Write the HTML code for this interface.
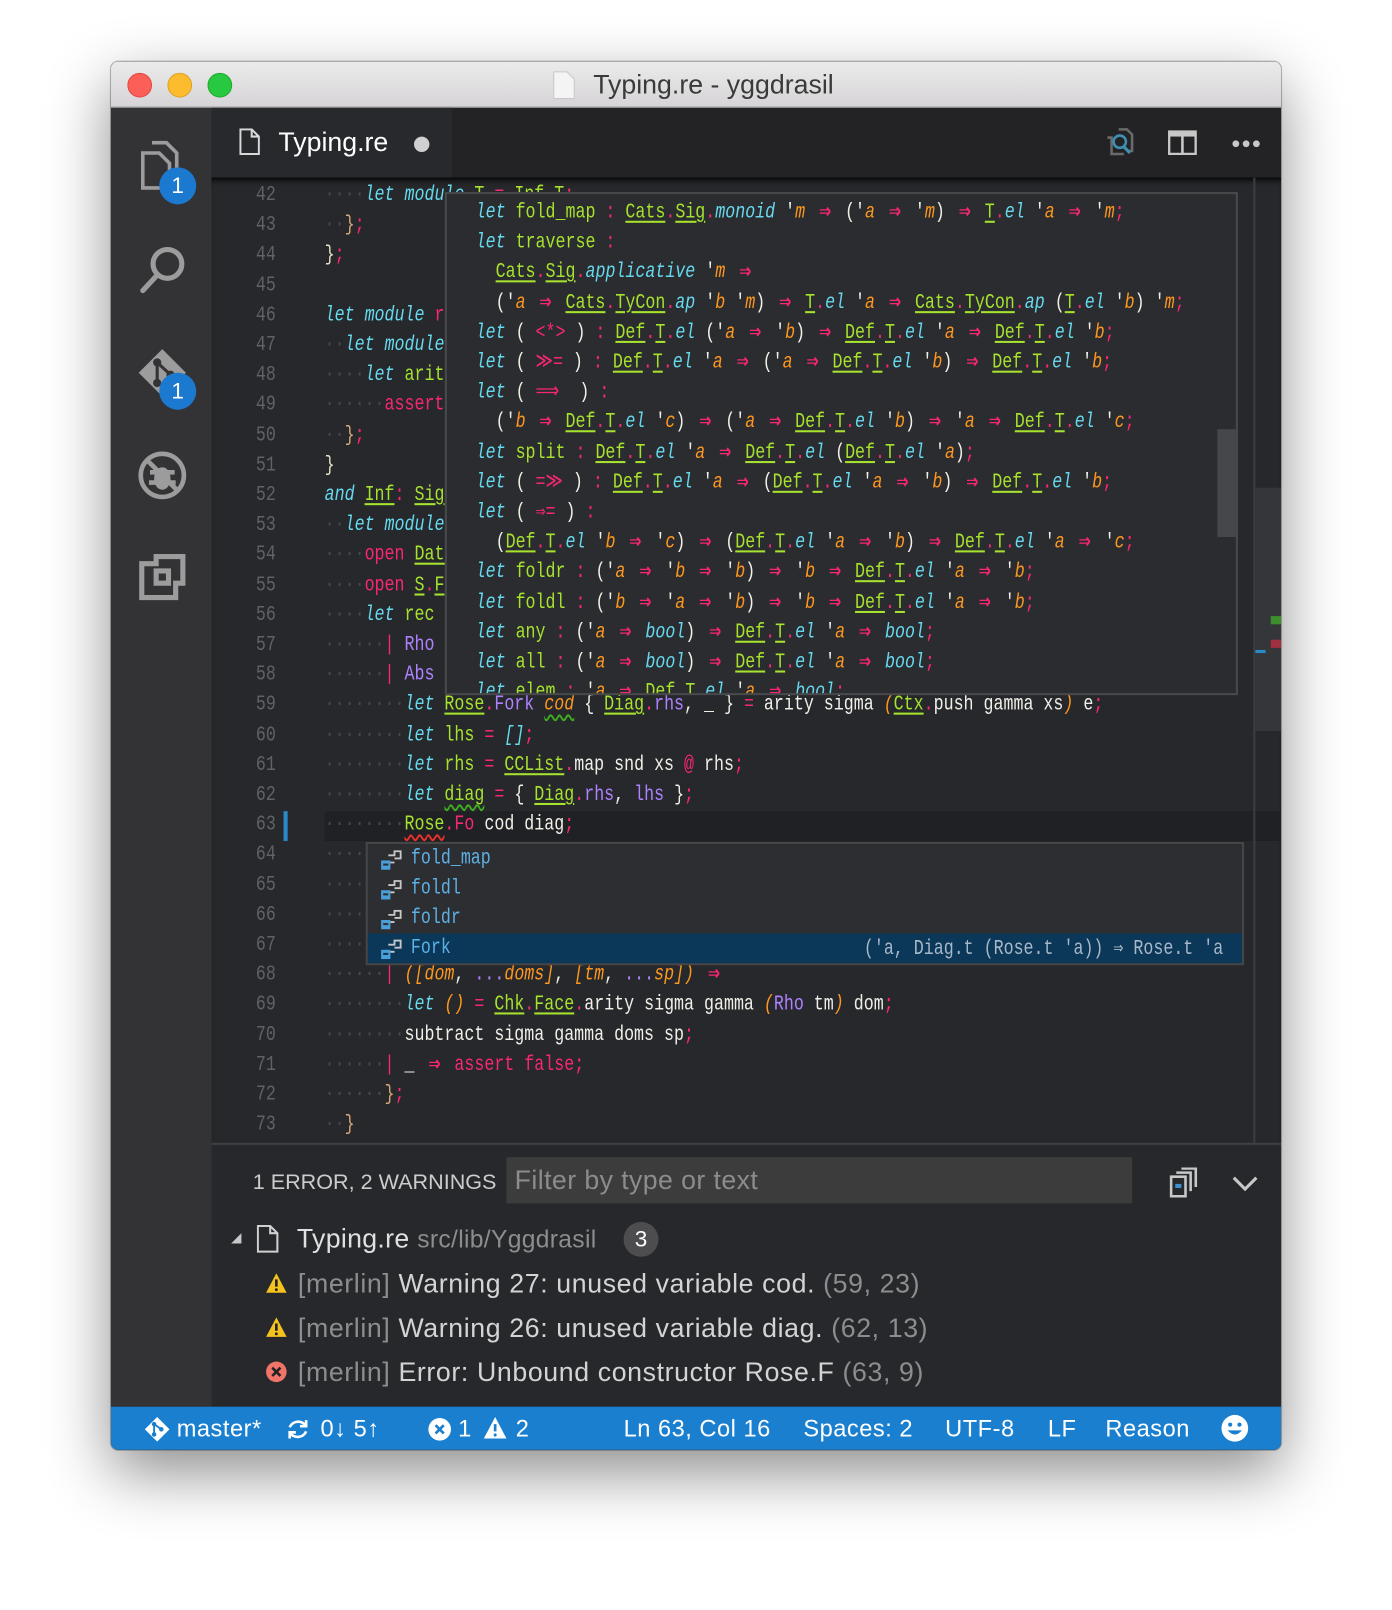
<!DOCTYPE html>
<html><head><meta charset="utf-8">
<style>
*{margin:0;padding:0;box-sizing:border-box}
html,body{width:1392px;height:1610px;overflow:hidden;background:#fff}
#wrap{position:absolute;left:0;top:0;width:1355px;height:1568px;transform:scale(1.0273,1.0268);transform-origin:0 0;font-family:"Liberation Sans",sans-serif}
.win{position:absolute;left:108px;top:60px;width:1139px;height:1352px;border-radius:7px;overflow:hidden;box-shadow:0 22px 60px rgba(0,0,0,.45),0 0 0 1px rgba(0,0,0,.25);background:#26282b}
.title{position:absolute;left:0;top:0;width:100%;height:45px;background:linear-gradient(#ecebec,#d6d4d6);border-bottom:1px solid #b8b6b8}
.title .t{position:absolute;left:0;width:100%;top:7px;text-align:center;font-size:26px;color:#3a3a3a;padding-left:34px}
.light{position:absolute;top:11px;width:24px;height:24px;border-radius:50%}
.act{position:absolute;left:0;top:45px;width:98px;height:1265px;background:#333336}
.badge{position:absolute;width:36px;height:36px;border-radius:50%;background:#1b7ad0;color:#fff;font-size:22px;text-align:center;line-height:36px}
.tabbar{position:absolute;left:98px;top:45px;width:1041px;height:68px;background:#232325}
.tab{position:absolute;left:0;top:0;width:234px;height:68px;background:#27292c;color:#fff;font-size:26px}
.ed{position:absolute;left:98px;top:113px;width:1041px;height:940px;background:#26282b;overflow:hidden;box-shadow:inset 0 6px 6px -4px #000}
pre{font-family:"Liberation Mono","DejaVu Sans Mono",monospace;font-size:21px;line-height:29.2px;color:#f0efe8;transform:scaleX(.771);transform-origin:0 0;white-space:pre;position:absolute}
k{color:#66d9ef;font-style:italic}
c{color:#66d9ef;font-style:italic}
g{color:#a6e22e}
u{color:#a6e22e;text-decoration:underline 2px #a6e22e;text-underline-offset:3px}
p{display:inline;color:#f92672}
o{color:#fd971f;font-style:italic}
v{color:#ae81ff}
d{color:#45484c}
t{color:#d9a878}
a2{display:inline-block;width:25.2px;text-align:center;color:#f92672;font-weight:bold;font-size:25px;line-height:1;vertical-align:-1px}
.sqg{text-decoration:underline wavy #3fae1f;text-underline-offset:4px}
.sqr{text-decoration:underline wavy #f0302a;text-underline-offset:4px}
.nums{color:#5f6266;text-align:right;width:72px}
.pop{position:absolute;left:227px;top:14px;width:772px;height:490px;background:#2b2c2f;border:2px solid #48494b;overflow:hidden}
.sug{position:absolute;left:150px;top:647px;width:855px;height:120px;background:#2d2e31;border:2px solid #454648;overflow:hidden}
.row{position:absolute;left:0;width:100%;height:29px}
.row .n{position:absolute;left:42px;top:0;font-family:"Liberation Mono",monospace;font-size:21px;line-height:29px;color:#5cb0e6;transform:scaleX(.771);transform-origin:0 0}
.row svg{position:absolute;left:12px;top:6px}
.panel{position:absolute;left:98px;top:1053px;width:1041px;height:257px;background:#26282b;border-top:2px solid #3e4043;color:#cfcfcf}
.status{position:absolute;left:0;top:1310px;width:100%;height:42px;background:#1a7fcf;color:#fff;font-size:23px;letter-spacing:.5px}
.status span{position:absolute;top:8px}
.msg{position:absolute;left:84px;font-size:26px;letter-spacing:.6px;white-space:nowrap;color:#d4d4d4}
.msg .g{color:#8d8d8d}
</style></head><body><div id="wrap">
<div class="win">
 <div class="title">
  <div class="light" style="left:16px;background:#fc5f57;border:1px solid #de4a42"></div>
  <div class="light" style="left:55px;background:#fdbc2e;border:1px solid #dea123"></div>
  <div class="light" style="left:94px;background:#28c840;border:1px solid #1eaa2e"></div>
  <svg style="position:absolute;left:430px;top:9px" width="22" height="28" viewBox="0 0 22 28"><path d="M1 1h13l7 7v19H1z" fill="#f4f4f4" stroke="#c8c8c8"/></svg>
  <div class="t">Typing.re - yggdrasil</div>
 </div>
 <div class="act">
  <svg style="position:absolute;left:28px;top:32px" width="44" height="48" viewBox="0 0 44 48" fill="none" stroke="#9c9c9c" stroke-width="3.5"><path d="M12 2h14l10 10v22"/><path d="M3 12h16l10 10v24H3z"/></svg>
  <div class="badge" style="left:47px;top:58px">1</div>
  <svg style="position:absolute;left:26px;top:133px" width="50" height="50" viewBox="0 0 50 50" fill="none" stroke="#9c9c9c" stroke-width="5"><circle cx="29" cy="19" r="14"/><path d="M19 30L5 45" stroke-linecap="round"/></svg>
  <svg style="position:absolute;left:25px;top:233px" width="50" height="50" viewBox="0 0 50 50"><path d="M25 2L48 25 25 48 2 25z" fill="#9c9c9c"/><circle cx="20" cy="15" r="4" fill="#333336"/><circle cx="20" cy="35" r="4" fill="#333336"/><circle cx="33" cy="27" r="4" fill="#333336"/><path d="M20 15v20M20 15l13 12" stroke="#333336" stroke-width="3"/></svg>
  <div class="badge" style="left:47px;top:258px">1</div>
  <svg style="position:absolute;left:25px;top:333px" width="50" height="50" viewBox="0 0 50 50" fill="none" stroke="#9c9c9c" stroke-width="4.5"><circle cx="25" cy="25" r="21"/><path d="M10 10l30 30"/><ellipse cx="25" cy="28" rx="8" ry="11" fill="#9c9c9c" stroke="none"/><path d="M13 22h24M12 32h26"/></svg>
  <svg style="position:absolute;left:27px;top:434px" width="46" height="46" viewBox="0 0 46 46" fill="none" stroke="#9c9c9c" stroke-width="5"><path d="M3 10h14v-7h26v26h-7v14H3z"/><path d="M17 17h12v12H17z"/></svg>
 </div>
 <div class="tabbar">
  <div class="tab">
   <svg style="position:absolute;left:27px;top:20px" width="20" height="26" viewBox="0 0 20 26" fill="none" stroke="#d8d8d8" stroke-width="2"><path d="M1 1h11l7 7v17H1z"/><path d="M12 1v7h7"/></svg>
   <span style="position:absolute;left:65px;top:18px">Typing.re</span>
   <span style="position:absolute;left:197px;top:28px;width:15px;height:15px;border-radius:50%;background:#cfcfcf"></span>
  </div>
  <svg style="position:absolute;left:868px;top:18px" width="30" height="32" viewBox="0 0 30 32" fill="none" stroke-width="2.5"><path d="M15 3h8l5 5v16h-3M4 11h4v16h12" stroke="#6a6a6a"/><circle cx="16" cy="15" r="6" stroke="#3f8fb0"/><path d="M20 20l6 6" stroke="#3f8fb0" stroke-width="3"/></svg>
  <svg style="position:absolute;left:931px;top:22px" width="28" height="24" viewBox="0 0 28 24"><path d="M1 1h26v22H1zM14 5v17" fill="none" stroke="#c8c8c8" stroke-width="2.5"/><rect x="1" y="1" width="26" height="5" fill="#c8c8c8"/></svg>
  <svg style="position:absolute;left:993px;top:31px" width="28" height="8"><circle cx="4" cy="4" r="3.3" fill="#c8c8c8"/><circle cx="14" cy="4" r="3.3" fill="#c8c8c8"/><circle cx="24" cy="4" r="3.3" fill="#c8c8c8"/></svg>
 </div>
 <div class="ed">
  <div style="position:absolute;left:110px;top:617px;width:931px;height:29px;background:#1f2124"></div>
  <div style="position:absolute;left:70px;top:617px;width:4px;height:29px;background:#2a8ac8"></div>
  <div style="position:absolute;left:1014px;top:0;width:2px;height:940px;background:#3b3d40"></div>
  <div style="position:absolute;left:1016px;top:302px;width:25px;height:237px;background:#34363a"></div>
  <div style="position:absolute;left:1031px;top:427px;width:10px;height:8px;background:#3e8e2e"></div>
  <div style="position:absolute;left:1031px;top:450px;width:10px;height:8px;background:#a03040"></div>
  <div style="position:absolute;left:1016px;top:460px;width:10px;height:3px;background:#2a8ac8"></div>
<pre class="nums" style="left:7px;top:3px">42
43
44
45
46
47
48
49
50
51
52
53
54
55
56
57
58
59
60
61
62
63
64
65
66
67
68
69
70
71
72
73</pre>
<pre style="left:110px;top:3px"><d>····</d><k>let</k> <k>module</k> <u>T</u> <p>=</p> <u>Inf</u><p>.</p><u>T</u><p>;</p>
<d>··</d><t>}</t><p>;</p>
<t style="color:#e8e0c8">}</t><p>;</p>

<k>let</k> <k>module</k> <p>rec</p> <u>Chk</u><p>:</p> <u>Sig</u>
<d>··</d><k>let</k> <k>module</k> <u>Term</u>
<d>····</d><k>let</k> <g>arity</g> <p>=</p>
<d>······</d><p>assert</p> <p>false</p>
<d>··</d><t>}</t><p>;</p>
<t style="color:#e8e0c8">}</t>
<k>and</k> <u>Inf</u><p>:</p> <u>Sig</u>
<d>··</d><k>let</k> <k>module</k> <u>Face</u>
<d>····</d><p>open</p> <u>Data</u>
<d>····</d><p>open</p> <u>S</u><p>.</p><u>F</u>
<d>····</d><k>let</k> <g>rec</g> <g>x</g>
<d>······</d><p>|</p> <v>Rho</v>
<d>······</d><p>|</p> <v>Abs</v>
<d>········</d><k>let</k> <u>Rose</u><p>.</p><v>Fork</v> <o class="sqg">cod</o> { <u>Diag</u><p>.</p><v>rhs</v>, _ } <p>=</p> arity sigma <o>(</o><u>Ctx</u><p>.</p>push gamma xs<o>)</o> e<p>;</p>
<d>········</d><k>let</k> <g>lhs</g> <p>=</p> <c>[]</c><p>;</p>
<d>········</d><k>let</k> <g>rhs</g> <p>=</p> <u>CCList</u><p>.</p>map snd xs <p>@</p> rhs<p>;</p>
<d>········</d><k>let</k> <g class="sqg">diag</g> <p>=</p> { <u>Diag</u><p>.</p><v>rhs</v>, <v>lhs</v> }<p>;</p>
<d>········</d><u class="sqr">Rose</u><p>.</p><p>Fo</p> cod diag<p>;</p>
<d>········</d>
<d>········</d>
<d>········</d>
<d>········</d>
<d>······</d><p>|</p> <o>([dom</o>, <v>...</v><o>doms]</o>, <o>[tm</o>, <v>...</v><o>sp])</o> <a2>⇒</a2>
<d>········</d><k>let</k> <o>()</o> <p>=</p> <u>Chk</u><p>.</p><u>Face</u><p>.</p>arity sigma gamma <o>(</o><v>Rho</v> tm<o>)</o> dom<p>;</p>
<d>········</d>subtract sigma gamma doms sp<p>;</p>
<d>······</d><p>|</p> _ <a2>⇒</a2> <p>assert</p> <p>false</p><p>;</p>
<d>······</d><t>}</t><p>;</p>
<d>··</d><t>}</t></pre>
  <div class="pop">
   <div style="position:absolute;left:750px;top:229px;width:18px;height:105px;background:#45474a"></div>
<pre style="left:28px;top:4px"><k>let</k> <g>fold_map</g> <p>:</p> <u>Cats</u><p>.</p><u>Sig</u><p>.</p><c>monoid</c> '<o>m</o> <a2>⇒</a2> ('<o>a</o> <a2>⇒</a2> '<o>m</o>) <a2>⇒</a2> <u>T</u><p>.</p><c>el</c> '<o>a</o> <a2>⇒</a2> '<o>m</o><p>;</p>
<k>let</k> <g>traverse</g> <p>:</p>
  <u>Cats</u><p>.</p><u>Sig</u><p>.</p><c>applicative</c> '<o>m</o> <a2>⇒</a2>
  ('<o>a</o> <a2>⇒</a2> <u>Cats</u><p>.</p><u>TyCon</u><p>.</p><c>ap</c> '<o>b</o> '<o>m</o>) <a2>⇒</a2> <u>T</u><p>.</p><c>el</c> '<o>a</o> <a2>⇒</a2> <u>Cats</u><p>.</p><u>TyCon</u><p>.</p><c>ap</c> (<u>T</u><p>.</p><c>el</c> '<o>b</o>) '<o>m</o><p>;</p>
<k>let</k> ( <p>&lt;*&gt;</p> ) <p>:</p> <u>Def</u><p>.</p><u>T</u><p>.</p><c>el</c> ('<o>a</o> <a2>⇒</a2> '<o>b</o>) <a2>⇒</a2> <u>Def</u><p>.</p><u>T</u><p>.</p><c>el</c> '<o>a</o> <a2>⇒</a2> <u>Def</u><p>.</p><u>T</u><p>.</p><c>el</c> '<o>b</o><p>;</p>
<k>let</k> ( <p>≫=</p> ) <p>:</p> <u>Def</u><p>.</p><u>T</u><p>.</p><c>el</c> '<o>a</o> <a2>⇒</a2> ('<o>a</o> <a2>⇒</a2> <u>Def</u><p>.</p><u>T</u><p>.</p><c>el</c> '<o>b</o>) <a2>⇒</a2> <u>Def</u><p>.</p><u>T</u><p>.</p><c>el</c> '<o>b</o><p>;</p>
<k>let</k> ( <p>⟹ </p> ) <p>:</p>
  ('<o>b</o> <a2>⇒</a2> <u>Def</u><p>.</p><u>T</u><p>.</p><c>el</c> '<o>c</o>) <a2>⇒</a2> ('<o>a</o> <a2>⇒</a2> <u>Def</u><p>.</p><u>T</u><p>.</p><c>el</c> '<o>b</o>) <a2>⇒</a2> '<o>a</o> <a2>⇒</a2> <u>Def</u><p>.</p><u>T</u><p>.</p><c>el</c> '<o>c</o><p>;</p>
<k>let</k> <g>split</g> <p>:</p> <u>Def</u><p>.</p><u>T</u><p>.</p><c>el</c> '<o>a</o> <a2>⇒</a2> <u>Def</u><p>.</p><u>T</u><p>.</p><c>el</c> (<u>Def</u><p>.</p><u>T</u><p>.</p><c>el</c> '<o>a</o>)<p>;</p>
<k>let</k> ( <p>=≫</p> ) <p>:</p> <u>Def</u><p>.</p><u>T</u><p>.</p><c>el</c> '<o>a</o> <a2>⇒</a2> (<u>Def</u><p>.</p><u>T</u><p>.</p><c>el</c> '<o>a</o> <a2>⇒</a2> '<o>b</o>) <a2>⇒</a2> <u>Def</u><p>.</p><u>T</u><p>.</p><c>el</c> '<o>b</o><p>;</p>
<k>let</k> ( <p>⇒=</p> ) <p>:</p>
  (<u>Def</u><p>.</p><u>T</u><p>.</p><c>el</c> '<o>b</o> <a2>⇒</a2> '<o>c</o>) <a2>⇒</a2> (<u>Def</u><p>.</p><u>T</u><p>.</p><c>el</c> '<o>a</o> <a2>⇒</a2> '<o>b</o>) <a2>⇒</a2> <u>Def</u><p>.</p><u>T</u><p>.</p><c>el</c> '<o>a</o> <a2>⇒</a2> '<o>c</o><p>;</p>
<k>let</k> <g>foldr</g> <p>:</p> ('<o>a</o> <a2>⇒</a2> '<o>b</o> <a2>⇒</a2> '<o>b</o>) <a2>⇒</a2> '<o>b</o> <a2>⇒</a2> <u>Def</u><p>.</p><u>T</u><p>.</p><c>el</c> '<o>a</o> <a2>⇒</a2> '<o>b</o><p>;</p>
<k>let</k> <g>foldl</g> <p>:</p> ('<o>b</o> <a2>⇒</a2> '<o>a</o> <a2>⇒</a2> '<o>b</o>) <a2>⇒</a2> '<o>b</o> <a2>⇒</a2> <u>Def</u><p>.</p><u>T</u><p>.</p><c>el</c> '<o>a</o> <a2>⇒</a2> '<o>b</o><p>;</p>
<k>let</k> <g>any</g> <p>:</p> ('<o>a</o> <a2>⇒</a2> <c>bool</c>) <a2>⇒</a2> <u>Def</u><p>.</p><u>T</u><p>.</p><c>el</c> '<o>a</o> <a2>⇒</a2> <c>bool</c><p>;</p>
<k>let</k> <g>all</g> <p>:</p> ('<o>a</o> <a2>⇒</a2> <c>bool</c>) <a2>⇒</a2> <u>Def</u><p>.</p><u>T</u><p>.</p><c>el</c> '<o>a</o> <a2>⇒</a2> <c>bool</c><p>;</p>
<k>let</k> <g>elem</g> <p>:</p> '<o>a</o> <a2>⇒</a2> <u>Def</u><p>.</p><u>T</u><p>.</p><c>el</c> '<o>a</o> <a2>⇒</a2> <c>bool</c><p>;</p></pre>
  </div>
  <div class="sug">
   <div class="row" style="top:0"><svg width="22" height="20" viewBox="0 0 22 20"><rect x="1" y="10" width="9" height="9" fill="#4a9fd8"/><rect x="3" y="13" width="5" height="2" fill="#2d2e31"/><path d="M8 5h6V1h6v7h-6M10 12h4" fill="none" stroke="#c8c8c8" stroke-width="1.8"/></svg><div class="n">fold_map</div></div>
   <div class="row" style="top:29px"><svg width="22" height="20" viewBox="0 0 22 20"><rect x="1" y="10" width="9" height="9" fill="#4a9fd8"/><rect x="3" y="13" width="5" height="2" fill="#2d2e31"/><path d="M8 5h6V1h6v7h-6M10 12h4" fill="none" stroke="#c8c8c8" stroke-width="1.8"/></svg><div class="n">foldl</div></div>
   <div class="row" style="top:58px"><svg width="22" height="20" viewBox="0 0 22 20"><rect x="1" y="10" width="9" height="9" fill="#4a9fd8"/><rect x="3" y="13" width="5" height="2" fill="#2d2e31"/><path d="M8 5h6V1h6v7h-6M10 12h4" fill="none" stroke="#c8c8c8" stroke-width="1.8"/></svg><div class="n">foldr</div></div>
   <div class="row" style="top:87px;height:31px;background:#0b3758"><svg width="22" height="20" viewBox="0 0 22 20"><rect x="1" y="10" width="9" height="9" fill="#4a9fd8"/><rect x="3" y="13" width="5" height="2" fill="#0b3758"/><path d="M8 5h6V1h6v7h-6M10 12h4" fill="none" stroke="#c8c8c8" stroke-width="1.8"/></svg><div class="n">Fork</div>
    <div style="position:absolute;right:18px;top:0;font-family:'Liberation Mono',monospace;font-size:21px;line-height:31px;color:#a8b8c8;transform:scaleX(.771);transform-origin:100% 0;white-space:pre">('a, Diag.t (Rose.t 'a)) ⇒ Rose.t 'a</div></div>
  </div>
 </div>
 <div class="panel">
  <div style="position:absolute;left:40px;top:25px;font-size:21px;color:#cccccc">1 ERROR, 2 WARNINGS</div>
  <div style="position:absolute;left:287px;top:12px;width:609px;height:45px;background:#3c3c3c;color:#8c8c8c;font-size:26px;letter-spacing:.4px;padding:7px 0 0 8px">Filter by type or text</div>
  <svg style="position:absolute;left:932px;top:22px" width="28" height="30" viewBox="0 0 28 30" fill="none" stroke="#c8c8c8" stroke-width="2.5"><path d="M2 9h14v19H2z"/><path d="M7 5h14v18M12 1h14v18"/><rect x="6" y="16" width="6" height="4" fill="#3b8fd0" stroke="none"/></svg>
  <svg style="position:absolute;left:993px;top:30px" width="26" height="16" viewBox="0 0 26 16"><path d="M2 2l11 11L24 2" fill="none" stroke="#c8c8c8" stroke-width="3"/></svg>
  <svg style="position:absolute;left:18px;top:85px" width="12" height="12"><path d="M11 1v10H1z" fill="#c8c8c8"/></svg>
  <svg style="position:absolute;left:44px;top:78px" width="22" height="27" viewBox="0 0 22 27" fill="none" stroke="#d0d0d0" stroke-width="2"><path d="M1 1h12l7 7v18H1z"/><path d="M13 1v7h7"/></svg>
  <div style="position:absolute;left:83px;top:76px;font-size:26px;letter-spacing:.3px;color:#e0e0e0;white-space:nowrap">Typing.re <span style="color:#8d8d8d;font-size:24px">src/lib/Yggdrasil</span></div>
  <div style="position:absolute;left:401px;top:75px;width:34px;height:34px;border-radius:50%;background:#4d4d4f;color:#fff;font-size:22px;text-align:center;line-height:34px">3</div>
  <svg style="position:absolute;left:52px;top:124px" width="22" height="22" viewBox="0 0 22 22"><path d="M11 1L21 20H1z" fill="#f4c21f"/><path d="M11 7v7" stroke="#222" stroke-width="2.6"/><circle cx="11" cy="17" r="1.4" fill="#222"/></svg>
  <div class="msg" style="top:120px"><span class="g">[merlin]</span> Warning 27: unused variable cod. <span class="g">(59, 23)</span></div>
  <svg style="position:absolute;left:52px;top:167px" width="22" height="22" viewBox="0 0 22 22"><path d="M11 1L21 20H1z" fill="#f4c21f"/><path d="M11 7v7" stroke="#222" stroke-width="2.6"/><circle cx="11" cy="17" r="1.4" fill="#222"/></svg>
  <div class="msg" style="top:163px"><span class="g">[merlin]</span> Warning 26: unused variable diag. <span class="g">(62, 13)</span></div>
  <svg style="position:absolute;left:52px;top:210px" width="22" height="22" viewBox="0 0 22 22"><circle cx="11" cy="11" r="10" fill="#f07568"/><path d="M7 7l8 8M15 7l-8 8" stroke="#222" stroke-width="2.5"/></svg>
  <div class="msg" style="top:206px"><span class="g">[merlin]</span> Error: Unbound constructor Rose.F <span class="g">(63, 9)</span></div>
 </div>
 <div class="status">
  <svg style="position:absolute;left:32px;top:9px" width="26" height="26" viewBox="0 0 26 26"><path d="M13 1l12 12-12 12L1 13z" fill="#fff"/><circle cx="10" cy="8" r="2.2" fill="#1a7fcf"/><circle cx="10" cy="18" r="2.2" fill="#1a7fcf"/><circle cx="17" cy="13" r="2.2" fill="#1a7fcf"/><path d="M10 8v10M10 8l7 5" stroke="#1a7fcf" stroke-width="1.8"/></svg>
  <span style="left:64px">master*</span>
  <svg style="position:absolute;left:170px;top:10px" width="24" height="24" viewBox="0 0 24 24" fill="none" stroke="#fff" stroke-width="2.6"><path d="M20 9a9 9 0 0 0-16 1M4 15a9 9 0 0 0 16-1"/><path d="M20 3v6h-6M4 21v-6h6"/></svg>
  <span style="left:204px">0↓ 5↑</span>
  <svg style="position:absolute;left:308px;top:10px" width="24" height="24" viewBox="0 0 24 24"><circle cx="12" cy="12" r="11" fill="#fff"/><path d="M8 8l8 8M16 8l-8 8" stroke="#1a7fcf" stroke-width="2.6"/></svg>
  <span style="left:338px">1</span>
  <svg style="position:absolute;left:362px;top:9px" width="24" height="24" viewBox="0 0 24 24"><path d="M12 1l11 21H1z" fill="#fff"/><path d="M12 8v7" stroke="#1a7fcf" stroke-width="2.6"/><circle cx="12" cy="18.5" r="1.5" fill="#1a7fcf"/></svg>
  <span style="left:394px">2</span>
  <span style="left:499px">Ln 63, Col 16</span>
  <span style="left:674px">Spaces: 2</span>
  <span style="left:812px">UTF-8</span>
  <span style="left:912px">LF</span>
  <span style="left:968px">Reason</span>
  <svg style="position:absolute;left:1080px;top:7px" width="28" height="28" viewBox="0 0 28 28"><circle cx="14" cy="14" r="13" fill="#fff"/><circle cx="9.5" cy="10.5" r="2" fill="#1a7fcf"/><circle cx="18.5" cy="10.5" r="2" fill="#1a7fcf"/><path d="M7 16q7 8 14 0" fill="#1a7fcf"/></svg>
 </div>
</div>
</div></body></html>
